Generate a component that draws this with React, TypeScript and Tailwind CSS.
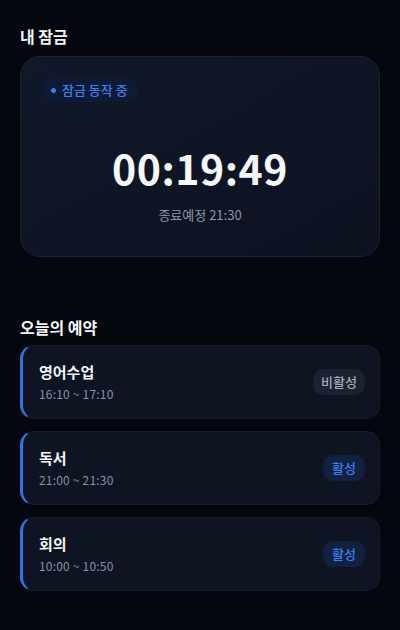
import React from "react";

const font = { fontFamily: '"Noto Sans CJK KR", "Noto Sans", sans-serif' };

function Item({ title, time, active }: { title: string; time: string; active: boolean }) {
  return (
    <div className="flex h-[74px] items-center justify-between rounded-[14px] border border-[#161d2c] border-l-[3px] border-l-[#3173e0] bg-[#0e1422] pl-[16px] pr-[14px]">
      <div className="flex flex-col">
        <div className="text-[15px] font-bold leading-[20px] text-[#f3f5f9]">{title}</div>
        <div className="mt-[3px] text-[12px] leading-[17px] tracking-[0.2px] text-[#8a92a4]">{time}</div>
      </div>
      {active ? (
        <div className="rounded-[10px] bg-[#11213f] px-[9px] py-[4px] text-[13px] font-medium leading-[18px] text-[#3b7ff0]">활성</div>
      ) : (
        <div className="rounded-[10px] bg-[#1c2230] px-[8px] py-[4px] text-[13px] font-medium leading-[18px] text-[#a4abb8]">비활성</div>
      )}
    </div>
  );
}

export default function App() {
  return (
    <div className="min-h-[630px] w-full bg-[#05070e] px-[20px] pt-[26px]" style={font}>
      <div className="text-[16px] font-bold leading-[20px] text-[#f3f5f9]">내 잠금</div>
      <div className="mt-[10px] flex h-[201px] flex-col rounded-[20px] border border-[#1a2233] bg-gradient-to-br from-[#111829] to-[#0c1220] px-[20px] pt-[21px]">
        <div className="flex self-start items-center gap-[6px] rounded-full bg-[#0f1b36] px-[10px] py-[3px]">
          <span className="h-[5px] w-[5px] rounded-full bg-[#3b7ff0]" />
          <span className="text-[13px] font-medium leading-[18px] text-[#3b7ff0]">잠금 동작 중</span>
        </div>
        <div className="mt-[40px] text-center text-[41px] font-bold leading-[50px] tracking-[0.5px] text-[#f6f7fa]">00:19:49</div>
        <div className="mt-[14px] text-center text-[13px] leading-[18px] text-[#8f97a8]">종료예정 21:30</div>
      </div>
      <div className="mt-[60px] text-[16px] font-bold leading-[20px] text-[#f3f5f9]">오늘의 예약</div>
      <div className="mt-[8px] flex flex-col gap-[12px]">
        <Item title="영어수업" time="16:10 ~ 17:10" active={false} />
        <Item title="독서" time="21:00 ~ 21:30" active={true} />
        <Item title="회의" time="10:00 ~ 10:50" active={true} />
      </div>
    </div>
  );
}
